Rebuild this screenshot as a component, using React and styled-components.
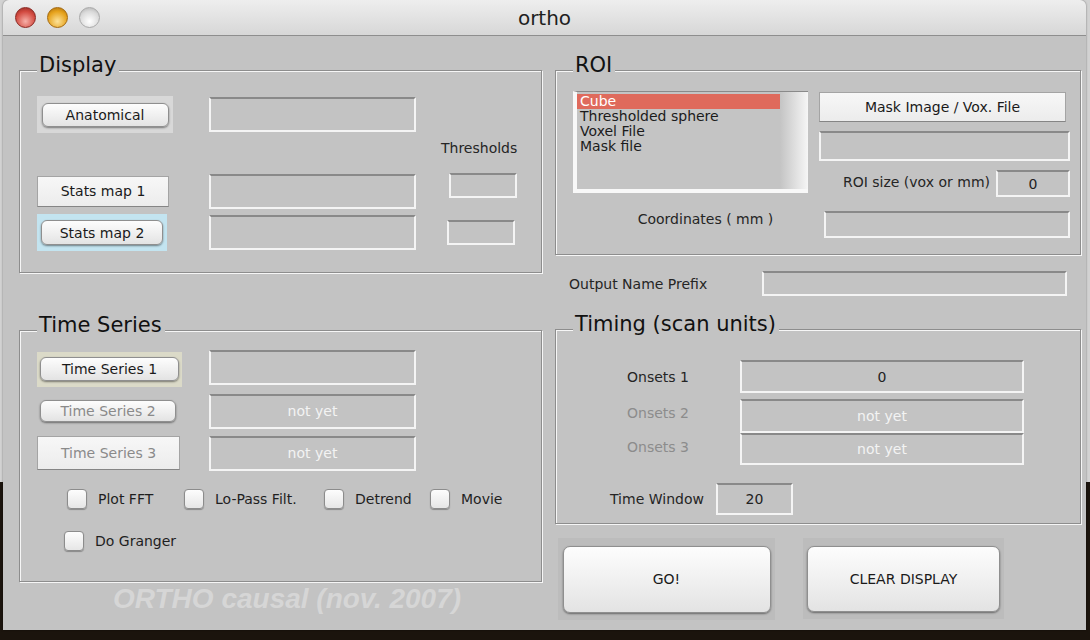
import styled, { createGlobalStyle } from "styled-components";

const GlobalStyle = createGlobalStyle`
  body {
    margin: 0;
    background: #1b140d;
    font-family: "DejaVu Sans", "Liberation Sans", sans-serif;
  }
`;

const BG = "#c3c3c3";

const Desktop = styled.div`
  width: 1090px;
  height: 640px;
  overflow: hidden;
  background: linear-gradient(to bottom, #d2d2d2 0, #d2d2d2 482px, #1b140d 482px);
`;

const Window = styled.div`
  margin-left: 3px;
  width: 1083px;
  height: 630px;
  background: ${BG};
  border-radius: 6px 6px 0 0;
  display: flex;
  flex-direction: column;
  box-shadow: 0 0 2px rgba(0, 0, 0, 0.5);
`;

const TitleBar = styled.div`
  height: 35px;
  border-bottom: 1px solid #8e8e8e;
  border-radius: 6px 6px 0 0;
  background: linear-gradient(#eeeeee, #d7d7d7);
  display: grid;
  grid-template-columns: 1fr auto 1fr;
  align-items: center;
`;

const Lights = styled.div`
  display: flex;
  gap: 11px;
  padding-left: 12px;
`;

const lightColors = {
  red: ["#f7b0a8", "#d24a40", "#8a2620"],
  yellow: ["#fde39a", "#e6a21c", "#a4680c"],
  gray: ["#ffffff", "#dadada", "#a9a9a9"],
};

const Light = styled.span`
  width: 21px;
  height: 21px;
  border-radius: 50%;
  box-sizing: border-box;
  border: 1px solid ${(p) => lightColors[p.$c][2]};
  background: radial-gradient(
    circle at 50% 70%,
    ${(p) => lightColors[p.$c][0]} 0,
    ${(p) => lightColors[p.$c][1]} 60%,
    ${(p) => lightColors[p.$c][2]} 100%
  );
`;

const Title = styled.div`
  font-size: 20px;
  color: #1e1e1e;
`;

const Content = styled.div`
  display: grid;
  grid-template-columns: 523px 526px;
  column-gap: 13px;
  padding-left: 16px;
`;

const Column = styled.div`
  display: flex;
  flex-direction: column;
`;

const Frame = styled.div`
  box-sizing: border-box;
  margin-top: ${(p) => p.$mt}px;
  height: ${(p) => p.$h}px;
  border: 1px solid #8d8d8d;
  box-shadow: inset 1px 1px 0 #f6f6f6, 1px 1px 0 #f6f6f6;
  display: flex;
  flex-direction: column;
`;

const FrameTitle = styled.div`
  align-self: flex-start;
  margin: -18px 0 0 17px;
  padding: 0 3px 0 2px;
  background: ${BG};
  font-size: 21px;
  line-height: 24px;
  color: #111;
`;

const Row = styled.div`
  display: grid;
  grid-template-columns: ${(p) => p.$cols || "172px 238px 68px"};
  align-items: center;
  height: ${(p) => p.$h}px;
  margin-top: ${(p) => p.$mt || 0}px;
  padding-left: ${(p) => (p.$pl === undefined ? 17 : p.$pl)}px;
`;

const EditBox = styled.div`
  box-sizing: border-box;
  width: ${(p) => p.$w}px;
  height: ${(p) => p.$h}px;
  margin-left: ${(p) => p.$ml || 0}px;
  align-self: ${(p) => p.$self || "auto"};
  border: 2px solid #f4f4f4;
  border-top-color: #898989;
  display: flex;
  align-items: center;
  justify-content: center;
  font-size: 14px;
  color: ${(p) => (p.$light ? "#f3f3f3" : "#222")};
`;

const Label = styled.div`
  font-size: 14px;
  white-space: nowrap;
  color: ${(p) => (p.$muted ? "#8c8c8c" : "#252525")};
  text-align: ${(p) => p.$align || "left"};
  width: ${(p) => (p.$w ? `${p.$w}px` : "auto")};
  margin-left: ${(p) => p.$ml || 0}px;
  margin-top: ${(p) => p.$mt || 0}px;
  align-self: ${(p) => p.$self || "auto"};
`;

const Wrap = styled.div`
  width: ${(p) => p.$w}px;
  height: ${(p) => p.$h}px;
  background: ${(p) => p.$bg};
  display: flex;
  align-items: center;
  justify-content: center;
`;

const RoundButton = styled.div`
  box-sizing: border-box;
  width: ${(p) => p.$w}px;
  height: ${(p) => p.$h}px;
  margin-left: ${(p) => p.$ml || 0}px;
  border-radius: ${(p) => p.$r || 6}px;
  border: 1px solid #8f8f8f;
  background: linear-gradient(#fdfdfd, #efefef 55%, #e3e3e3);
  box-shadow: 0 1px 2px rgba(0, 0, 0, 0.45);
  display: flex;
  align-items: center;
  justify-content: center;
  font-size: 14px;
  color: ${(p) => (p.$muted ? "#8a8a8a" : "#1a1a1a")};
`;

const FlatButton = styled.div`
  box-sizing: border-box;
  width: ${(p) => p.$w}px;
  height: ${(p) => p.$h}px;
  margin-top: ${(p) => p.$mt || 0}px;
  border: 1px solid #a4a4a4;
  border-bottom-color: #858585;
  background: linear-gradient(#f7f7f7, #ececec);
  display: flex;
  align-items: center;
  justify-content: center;
  font-size: 14px;
  color: ${(p) => (p.$muted ? "#8a8a8a" : "#1a1a1a")};
`;

const CheckItem = styled.label`
  display: flex;
  align-items: center;
  gap: 11px;
  font-size: 14px;
  color: #1f1f1f;
  white-space: nowrap;
`;

const CheckBox = styled.span`
  box-sizing: border-box;
  width: 20px;
  height: 20px;
  border-radius: 4px;
  border: 1px solid #8c8c8c;
  background: linear-gradient(#fdfdfd, #e6e6e6);
  box-shadow: 0 1px 1px rgba(0, 0, 0, 0.3);
`;

const Footer = styled.div`
  margin-top: 1px;
  padding-left: 94px;
  font-family: "Liberation Sans", Arial, sans-serif;
  font-weight: bold;
  font-style: italic;
  font-size: 28px;
  line-height: 32px;
  color: #d6d6d6;
`;

const RoiGrid = styled.div`
  display: grid;
  grid-template-columns: 235px 251px;
  column-gap: 11px;
  row-gap: 14px;
  align-items: start;
  margin-top: 14px;
  padding-left: 17px;
`;

const ListBox = styled.div`
  box-sizing: border-box;
  width: 235px;
  height: 102px;
  border-top: 1px solid #8a8a8a;
  border-left: 4px solid #f8f8f8;
  border-bottom: 4px solid #f8f8f8;
  padding-top: 2px;
  background: linear-gradient(to right, #c4c4c4 0, #c4c4c4 203px, #f6f6f6 100%);
`;

const ListItem = styled.div`
  width: 203px;
  height: 15px;
  line-height: 15px;
  padding-left: 3px;
  box-sizing: border-box;
  font-size: 14px;
  color: ${(p) => (p.$selected ? "#fff" : "#1b1b1b")};
  background: ${(p) => (p.$selected ? "#df6a5c" : "transparent")};
`;

const Stack = styled.div`
  display: flex;
  flex-direction: column;
  gap: 9px;
`;

const SizeRow = styled.div`
  display: flex;
  justify-content: flex-end;
  align-items: center;
  gap: 6px;
`;

const OutputRow = styled.div`
  display: flex;
  align-items: center;
  height: 25px;
  margin-top: 16px;
  padding-left: 14px;
`;

const WindowRow = styled.div`
  display: flex;
  align-items: center;
  gap: 12px;
  height: 32px;
  margin-top: 18px;
  padding-left: 54px;
`;

const ButtonRow = styled.div`
  display: flex;
  gap: 28px;
  margin-top: 14px;
  padding-left: 3px;
`;

export default function App() {
  return (
    <Desktop>
      <GlobalStyle />
      <Window>
        <TitleBar>
          <Lights>
            <Light $c="red" />
            <Light $c="yellow" />
            <Light $c="gray" />
          </Lights>
          <Title>ortho</Title>
          <div />
        </TitleBar>

        <Content>
          <Column>
            <Frame $mt={34} $h={203}>
              <FrameTitle>Display</FrameTitle>
              <Row $h={37} $mt={19}>
                <Wrap $w={136} $h={37} $bg="#d8d8d8">
                  <RoundButton $w={127} $h={24}>Anatomical</RoundButton>
                </Wrap>
                <EditBox $w={207} $h={35} />
              </Row>
              <Row $h={30}>
                <span />
                <span />
                <Label $ml={-6}>Thresholds</Label>
              </Row>
              <Row $h={36} $mt={10}>
                <FlatButton $w={132} $h={31}>Stats map 1</FlatButton>
                <EditBox $w={207} $h={35} />
                <EditBox $w={68} $h={25} $ml={2} $self="start" />
              </Row>
              <Row $h={37} $mt={5}>
                <Wrap $w={130} $h={37} $bg="#c3e4f0">
                  <RoundButton $w={122} $h={25}>Stats map 2</RoundButton>
                </Wrap>
                <EditBox $w={207} $h={35} />
                <EditBox $w={68} $h={25} />
              </Row>
            </Frame>

            <Frame $mt={57} $h={252}>
              <FrameTitle>Time Series</FrameTitle>
              <Row $h={38} $mt={13}>
                <Wrap $w={145} $h={35} $bg="#dbdac8">
                  <RoundButton $w={139} $h={24}>Time Series 1</RoundButton>
                </Wrap>
                <EditBox $w={207} $h={35} $self="start" />
              </Row>
              <Row $h={38} $mt={4}>
                <RoundButton $w={136} $h={22} $ml={3} $muted>
                  Time Series 2
                </RoundButton>
                <EditBox $w={207} $h={35} $light>
                  not yet
                </EditBox>
              </Row>
              <Row $h={38} $mt={4}>
                <FlatButton $w={143} $h={34} $muted>
                  Time Series 3
                </FlatButton>
                <EditBox $w={207} $h={35} $light>
                  not yet
                </EditBox>
              </Row>
              <Row $h={22} $mt={16} $pl={47} $cols="117px 140px 106px auto">
                <CheckItem>
                  <CheckBox />
                  Plot FFT
                </CheckItem>
                <CheckItem>
                  <CheckBox />
                  Lo-Pass Filt.
                </CheckItem>
                <CheckItem>
                  <CheckBox />
                  Detrend
                </CheckItem>
                <CheckItem>
                  <CheckBox />
                  Movie
                </CheckItem>
              </Row>
              <Row $h={22} $mt={20} $pl={44} $cols="auto">
                <CheckItem>
                  <CheckBox />
                  Do Granger
                </CheckItem>
              </Row>
            </Frame>

            <Footer>ORTHO causal (nov. 2007)</Footer>
          </Column>

          <Column>
            <Frame $mt={34} $h={185}>
              <FrameTitle>ROI</FrameTitle>
              <RoiGrid>
                <ListBox>
                  <ListItem $selected>Cube</ListItem>
                  <ListItem>Thresholded sphere</ListItem>
                  <ListItem>Voxel File</ListItem>
                  <ListItem>Mask file</ListItem>
                </ListBox>
                <Stack>
                  <FlatButton $w={247} $h={30} $mt={1}>
                    Mask Image / Vox. File
                  </FlatButton>
                  <EditBox $w={251} $h={30} />
                  <SizeRow>
                    <Label $mt={-4}>ROI size (vox or mm)</Label>
                    <EditBox $w={74} $h={27}>0</EditBox>
                  </SizeRow>
                </Stack>
                <Label $align="center" $ml={30}>
                  Coordinates ( mm )
                </Label>
                <EditBox $w={246} $h={27} $ml={5} />
              </RoiGrid>
            </Frame>

            <OutputRow>
              <Label $w={193}>Output Name Prefix</Label>
              <EditBox $w={305} $h={25} />
            </OutputRow>

            <Frame $mt={33} $h={195}>
              <FrameTitle>Timing (scan units)</FrameTitle>
              <Row $h={33} $mt={24} $pl={20} $cols="164px 284px">
                <Label $align="center">Onsets 1</Label>
                <EditBox $w={284} $h={33}>0</EditBox>
              </Row>
              <Row $h={34} $mt={6} $pl={20} $cols="164px 284px">
                <Label $align="center" $mt={-6} $muted>
                  Onsets 2
                </Label>
                <EditBox $w={284} $h={34} $light>
                  not yet
                </EditBox>
              </Row>
              <Row $h={32} $pl={20} $cols="164px 284px">
                <Label $align="center" $mt={-5} $muted>
                  Onsets 3
                </Label>
                <EditBox $w={284} $h={32} $light>
                  not yet
                </EditBox>
              </Row>
              <WindowRow>
                <Label>Time Window</Label>
                <EditBox $w={77} $h={32}>20</EditBox>
              </WindowRow>
            </Frame>

            <ButtonRow>
              <Wrap $w={217} $h={82} $bg="#bcbcbc">
                <RoundButton $w={208} $h={67} $r={7}>GO!</RoundButton>
              </Wrap>
              <Wrap $w={201} $h={81} $bg="#bcbcbc">
                <RoundButton $w={193} $h={66} $r={7}>CLEAR DISPLAY</RoundButton>
              </Wrap>
            </ButtonRow>
          </Column>
        </Content>
      </Window>
    </Desktop>
  );
}
